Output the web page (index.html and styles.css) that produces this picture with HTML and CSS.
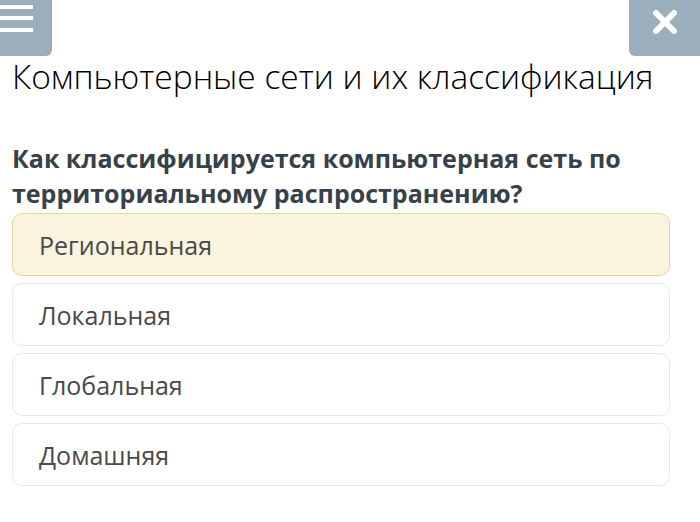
FILE: index.html
```html
<!DOCTYPE html>
<html lang="ru">
<head>
    <meta charset="UTF-8">
    <meta name="viewport" content="width=device-width, initial-scale=1.0">
    <title>Компьютерные сети и их классификация</title>
    <link rel="stylesheet" href="styles.css">
</head>
<body>
    <header class="topbar">
        <button class="tool-btn menu-btn" aria-label="Меню">
            <svg width="34" height="34" viewBox="0 0 34 34">
                <rect x="0" y="5" width="33" height="4" fill="#fff"/>
                <rect x="0" y="16" width="33" height="4" fill="#fff"/>
                <rect x="0" y="28" width="33" height="4" fill="#fff"/>
            </svg>
        </button>
        <button class="tool-btn close-btn" aria-label="Закрыть">
            <svg width="26" height="26" viewBox="0 0 26 26">
                <path d="M4 4 L22 22 M22 4 L4 22" stroke="#fff" stroke-width="6" stroke-linecap="round"/>
            </svg>
        </button>
    </header>

    <main class="quiz">
        <h1 class="quiz-title">Компьютерные сети и их классификация</h1>
        <h2 class="question">Как классифицируется компьютерная сеть по территориальному распространению?</h2>

        <div class="answers">
            <div class="answer selected">Региональная</div>
            <div class="answer">Локальная</div>
            <div class="answer">Глобальная</div>
            <div class="answer">Домашняя</div>
        </div>
    </main>
</body>
</html>
```

FILE: styles.css
```css
body {
    font-family: 'Open Sans', sans-serif;
    margin: 0;
    padding: 0;
    background-color: #fff;
    color: #3a444c;
}
.topbar {
    display: flex;
    justify-content: space-between;
    height: 56px;
}
.tool-btn {
    border: none;
    padding: 0;
    background-color: #9aaebb;
    display: flex;
    align-items: center;
    justify-content: center;
    height: 56px;
}
.menu-btn {
    width: 52px;
    border-bottom-right-radius: 6px;
    justify-content: flex-start;
    align-items: flex-start;
}
.close-btn {
    width: 71px;
    border-bottom-left-radius: 6px;
    align-items: flex-start;
    padding-top: 9px;
}
.quiz {
    padding: 0 30px 0 12px;
}
.quiz-title {
    font-size: 33.5px;
    font-weight: 300;
    color: #000;
    margin: 0;
    line-height: 40px;
}
.question {
    font-size: 25px;
    font-weight: 700;
    line-height: 35px;
    margin: 45px 0 0;
    color: #37414a;
}
.answers {
    display: flex;
    flex-direction: column;
    gap: 7px;
    margin-top: 2px;
}
.answer {
    border: 1px solid #e6e8ea;
    border-radius: 10px;
    height: 61px;
    display: flex;
    align-items: center;
    padding-left: 26px;
    font-size: 25px;
    color: #4a4a4a;
}
.answer.selected {
    background-color: #faf3de;
    border-color: #e8d79c;
}
```
